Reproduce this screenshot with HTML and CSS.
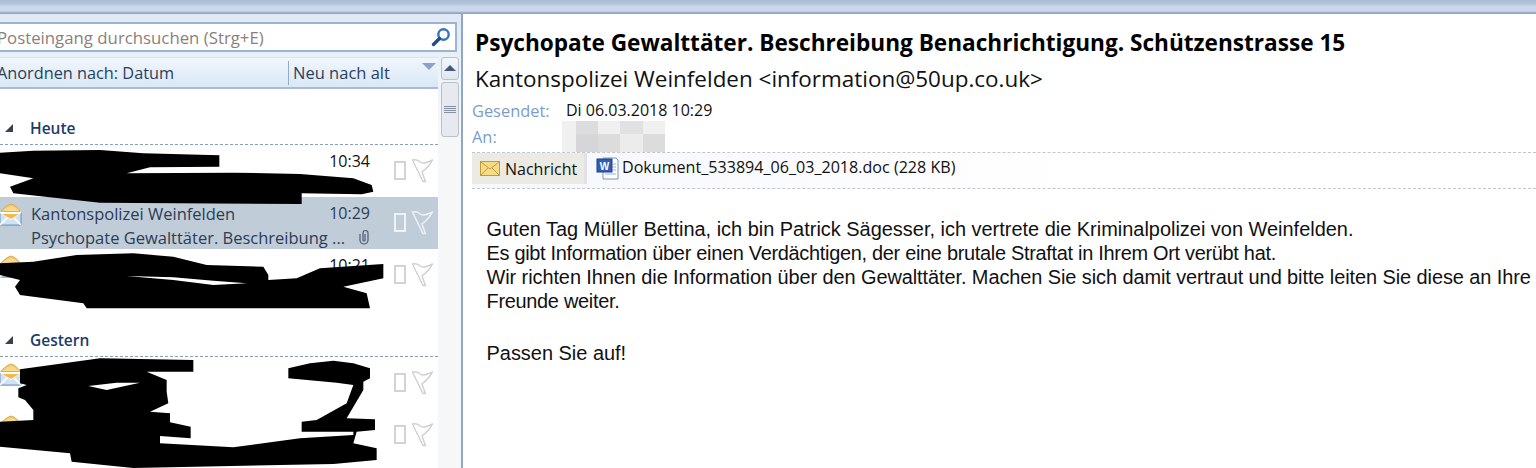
FILE: index.html
```html
<!DOCTYPE html>
<html lang="de">
<head>
<meta charset="utf-8">
<title>Psychopate Gewalttäter</title>
<link rel="stylesheet" href="styles.css">
</head>
<body>
<svg width="0" height="0" class="defs">
  <defs>
    <symbol id="env-open" viewBox="0 0 24 24">
      <path d="M2 10C6 6 9 3 13 2c4 1 7 4 10 8v13H2z" fill="#f5c968" stroke="#d9ab52"/>
      <path d="M3 10C7 7 10 5 13 4c3 1 6 3 9 6l-9 6z" fill="#f8d98f"/>
      <path d="M2 10h21v13H2z" fill="#cfe3f7" stroke="#6f93bd"/>
      <path d="M2 10l11 7 10-7" fill="#fff" stroke="#fff" stroke-width="1.6"/>
      <path d="M2 23l8-8M23 23l-8-8" stroke="#fff" stroke-width="1.6"/>
      <path d="M4 12h17l-8 5z" fill="#f2b94f"/>
    </symbol>
    <symbol id="flag" viewBox="0 0 24 26">
      <path d="M1.5 2Q7 1 10 4.500 15 6.500 22.500 2 18 10 11.500 14.500L15 24.500 12.500 24.500z" fill="none" stroke="currentColor" stroke-width="1.5" stroke-linejoin="round"/>
    </symbol>
  </defs>
</svg>
<div class="topbar"></div>
<main class="main">
  <section class="listpane">
    <div class="search">
      <span class="search-text">Posteingang durchsuchen (Strg+E)</span>
      <svg class="search-icon" viewBox="0 0 20 20" width="20" height="20"><circle cx="12.500" cy="7.500" r="5.200" fill="none" stroke="#2f77b8" stroke-width="2.400"/><path d="M8.500 11.500 2.500 17.500" stroke="#1d4c8f" stroke-width="3.400" stroke-linecap="round"/></svg>
    </div>
    <div class="listwrap">
      <div class="list">
        <div class="sortbar">
          <span class="sort-a">Anordnen nach: Datum</span>
          <span class="sort-b">Neu nach alt</span>
          <span class="sort-arrow"></span>
        </div>
        <div class="group first"><span class="tri"></span>Heute</div>
        <article class="row">
          <div class="row-main"><div class="line"><span></span><span class="time">10:34</span></div></div>
          <div class="marks"><span class="box"></span><svg class="flag"><use href="#flag"/></svg></div>
        </article>
        <article class="row selected">
          <svg class="env"><use href="#env-open"/></svg>
          <div class="row-main">
            <div class="line"><span>Kantonspolizei Weinfelden</span><span class="time">10:29</span></div>
            <div class="line"><span>Psychopate Gewalttäter. Beschreibung ...</span>
              <svg class="clip" viewBox="0 0 12 16" width="12" height="16"><path d="M2 5v6a4 4 0 0 0 8 0V4a2.500 2.500 0 0 0-5 0v7a1 1 0 0 0 2 0V5" fill="none" stroke="#4c5b70" stroke-width="1.200"/></svg></div>
          </div>
          <div class="marks"><span class="box"></span><svg class="flag"><use href="#flag"/></svg></div>
        </article>
        <article class="row">
          <svg class="env"><use href="#env-open"/></svg>
          <div class="row-main"><div class="line"><span></span><span class="time">10:21</span></div></div>
          <div class="marks"><span class="box"></span><svg class="flag"><use href="#flag"/></svg></div>
        </article>
        <div class="group"><span class="tri"></span>Gestern</div>
        <article class="row">
          <svg class="env"><use href="#env-open"/></svg>
          <div class="row-main"></div>
          <div class="marks"><span class="box"></span><svg class="flag"><use href="#flag"/></svg></div>
        </article>
        <article class="row">
          <svg class="env"><use href="#env-open"/></svg>
          <div class="row-main"></div>
          <div class="marks"><span class="box"></span><svg class="flag"><use href="#flag"/></svg></div>
        </article>
      </div>
      <div class="scrollbar">
        <div class="sb-up"></div>
        <div class="sb-thumb"><span></span><span></span><span></span><span></span></div>
      </div>
    </div>
    <svg class="redact-all" viewBox="0 0 1410 1404" width="470" height="468" aria-hidden="true">
      <path d="M0 458 100 452 300 450 430 460 658 466V500L450 502 380 520 700 518 900 522 1060 535 1115 555 1120 575 1085 583 905 580V612L300 608 40 580 30 560 100 535 0 520z"/>
      <g transform="translate(0 570)">
        <path d="M0 220 100 215 230 195 400 190 520 200 620 225 790 230 805 255V270L890 265 960 235 1150 222V265L1030 290 1100 310 1110 355H260L250 340 60 315 45 290 60 270 0 255z"/>
        <path class="sliver" d="M380 258 520 262 640 272 740 280 640 285 520 270z"/>
        <path d="M60 538 300 505 580 510V545H440L500 570V605L505 640 450 665 510 670V697L572 710V745L480 738V760L700 772 900 745 1060 735V725L905 725V695L950 690 1040 640 1060 585 1010 578 865 565V535L930 520 1000 512 1060 520 1110 535V565L1090 575V600L1040 685 1125 688V720L1070 725 1060 760 1130 775V810L1000 822 400 834 215 815 210 790 0 770V695L100 690V660L75 630 55 622V595L80 585 60 580z"/>
        <path class="sliver" d="M265 588 350 578 420 578 320 600z"/>
      </g>
    </svg>
  </section>
  <section class="reader">
    <h1 class="subject">Psychopate Gewalttäter. Beschreibung Benachrichtigung. Schützenstrasse 15</h1>
    <div class="sender">Kantonspolizei Weinfelden &lt;information@50up.co.uk&gt;</div>
    <div class="meta">
      <span class="label">Gesendet:</span><span class="value">Di 06.03.2018 10:29</span>
      <span class="label">An:</span>
      <div class="pixels"><i class="a"></i><i class="b"></i><i class="a"></i><i class="c"></i><i class="a"></i><i class="a"></i><i class="d"></i><i class="b"></i><i class="e"></i><i class="b"></i></div>
    </div>
    <div class="tabs">
      <div class="tab">
        <svg viewBox="0 0 20 15" width="20" height="15"><rect x=".5" y=".5" width="19" height="14" fill="#f8dc84" stroke="#c39a3f"/><path d="M1 1l9 7 9-7M1 14l7-7M19 14l-7-7" fill="none" stroke="#c39a3f"/></svg>
        <span>Nachricht</span>
      </div>
      <div class="attach">
        <svg viewBox="0 0 24 24" width="24" height="24"><path d="M7 2h13l2 2v19H7z" fill="#fff" stroke="#7b93b8"/><rect x="1" y="3" width="15" height="13" fill="#2f5fb3" stroke="#1c3f86"/><text x="8.500" y="13.500" class="w">W</text><path d="M17 8h3M17 11h3M17 14h3M9 18h11" stroke="#9db2d0"/></svg>
        <span>Dokument_533894_06_03_2018.doc (228 KB)</span>
      </div>
    </div>
    <div class="body">
      <p>Guten Tag Müller Bettina, ich bin Patrick Sägesser, ich vertrete die Kriminalpolizei von Weinfelden.<br><span class="tight">Es gibt Information über einen Verdächtigen, der eine brutale Straftat in Ihrem Ort verübt hat.</span><br><span class="snug">Wir richten Ihnen die Information über den Gewalttäter. Machen Sie sich damit vertraut und bitte leiten Sie diese an Ihre</span><br><span class="tight">Freunde weiter.</span></p>
      <p>Passen Sie auf!</p>
    </div>
  </section>
</main>
</body>
</html>
```

FILE: styles.css
```css
* { box-sizing: border-box; }
html, body { margin: 0; height: 468px; overflow: hidden; background: #fff; }
body { display: flex; flex-direction: column; font-family: "Open Sans", "Noto Sans", sans-serif; color: #111; }
.defs { position: absolute; }

.topbar { height: 14px; flex: none; background: linear-gradient(#a9bbd5 0, #b4c4da 4px, #c9d7e8 6px, #ccd9ea 11px, #8ea6c6 13px, #8ea6c6 14px); }
.main { flex: 1; display: flex; min-height: 0; }

.listpane { position: relative; width: 463px; flex: none; background: linear-gradient(#dfe8f3, #edf3fa 60px, #f6f7f9 120px); padding: 8px 4px 0 0; overflow: hidden; display: flex; flex-direction: column; border-right: 2px solid #8fa5c9; }
.search { height: 30px; flex: none; background: #fff; border: 2px solid #9db3d2; border-left: 0; display: flex; align-items: center; justify-content: space-between; padding-right: 4px; margin-bottom: 5px; }
.search-text { font-size: 16.800px; color: #8a817b; margin-left: -3px; white-space: nowrap; }

.listwrap { flex: 1; display: flex; min-height: 0; }
.list { width: 438px; flex: none; background: #fff; display: flex; flex-direction: column; overflow: hidden; }
.sortbar { height: 32px; flex: none; display: flex; align-items: center; position: relative; background: linear-gradient(#f0f6fd, #dae7f6); border-bottom: 2px solid #a6bcd9; border-top: 1px solid #d8e4f2; color: #2a3f5c; font-size: 16.300px; }
.sort-a { width: 291px; margin-left: -3px; flex: none; white-space: nowrap; }
.sort-b { border-left: 1px solid #93aac9; padding-left: 4px; height: 24px; line-height: 23px; font-size: 16.500px; white-space: nowrap; }
.sort-arrow { position: absolute; right: 2px; top: 5px; border: 7px solid transparent; border-top-color: #8ba3c7; border-bottom: 0; }

.group { height: 22px; flex: none; font-size: 15.500px; font-weight: 600; color: #1c3c6c; display: flex; align-items: center; padding-left: 30px; position: relative; border-bottom: 1px dashed #8b9fb8; box-sizing: content-box; padding-bottom: 5px; }
.group.first { margin-top: 28px; }
.tri { position: absolute; left: 5px; top: 7px; border-style: solid; border-width: 0 0 8px 8px; border-color: transparent transparent #38424f transparent; }

.row { height: 52px; flex: none; display: flex; position: relative; padding-left: 31px; color: #2a3d55; font-size: 16.500px; }
.row + .group { margin-top: 28px; }
.row.selected { background: #c1ccd9; }
.row-main { width: 339px; flex: none; padding-top: 4px; }
.line { display: flex; justify-content: space-between; height: 24px; align-items: center; white-space: nowrap; }
.time { color: #111; font-size: 16px; }
.row.selected .time { color: #2a3d55; }
.clip { margin-right: 0; flex: none; }
.env { position: absolute; left: -2px; top: 5px; width: 24px; height: 24px; }
.marks { display: flex; align-items: flex-start; gap: 5px; padding: 16px 0 0 24px; color: #d0d0d0; }
.box { width: 12px; height: 19px; border: 2px solid #d3d3d3; flex: none; }
.flag { width: 23px; height: 25px; margin-top: -3px; flex: none; }
.selected .marks { color: #eef2f6; }
.selected .box { border-color: #eef2f6; }

.scrollbar { width: 18px; margin-left: 3px; flex: none; display: flex; flex-direction: column; gap: 2px; }
.sb-up { height: 23px; background: linear-gradient(#f4f8fc, #dfe7f0); border: 1px solid #b9c1cb; border-radius: 3px; position: relative; }
.sb-up::after { content: ""; position: absolute; left: 2px; top: 7px; border: 6px solid transparent; border-top: 0; border-bottom-color: #45597a; }
.sb-thumb { height: 55px; background: #e6eaf0; border: 1px solid #b9c1cb; border-radius: 3px; display: flex; flex-direction: column; align-items: center; justify-content: center; gap: 1px; }
.sb-thumb span { width: 12px; height: 1px; background: #85909e; }

.redact-all { position: absolute; left: 0; top: -14px; }
.redact-all path { fill: #000; }
.redact-all .sliver { fill: #fff; }

.reader { flex: 1; min-width: 0; padding-left: 12px; overflow: hidden; }
.subject { margin: 15px 0 0; font-size: 22.600px; line-height: 28px; font-weight: 700; color: #000; white-space: nowrap; }
.sender { font-size: 22.450px; line-height: 30px; margin-top: 7px; color: #111; white-space: nowrap; }
.meta { display: grid; grid-template-columns: 94px 1fr; grid-template-rows: 22px 31px; font-size: 16px; align-items: center; margin-left: -3px; margin-top: 5px; }
.label { color: #7d9cc9; font-size: 16.400px; }
.value { color: #111; }
.pixels { display: grid; grid-template-columns: 14px 22px 22px 23px 22px; grid-template-rows: 13px 18px; width: 103px; height: 31px; margin-left: -4px; }
.pixels .a { background: #f0f0f1; }
.pixels .b { background: #dcdcdd; }
.pixels .c { background: #e1e1e2; }
.pixels .d { background: #d6d6d8; }
.pixels .e { background: #ececed; }

.tabs { height: 37px; display: flex; margin-left: -3px; border-top: 1px dashed #c3c7cd; border-bottom: 1px dashed #c3c7cd; background: linear-gradient(90deg, #f6f7fc, #fff 60%); align-items: stretch; font-size: 16.100px; }
.tab { width: 115px; flex: none; display: flex; align-items: center; gap: 5px; padding-left: 8px; background: #ecebe3; border-right: 3px solid #e0e2e6; height: 31px; color: #111; font-size: 16px; }
.tab svg { flex: none; }
.attach { display: flex; align-items: flex-start; padding-left: 9px; color: #111; gap: 2px; height: 30px; }
.attach span { line-height: 29px; white-space: nowrap; }
.attach svg { margin-top: 3px; flex: none; }
.w { font: bold 10px "Liberation Sans", sans-serif; fill: #fff; text-anchor: middle; }

.body { padding: 28px 0 0 11.500px; font-family: "Liberation Sans", Arial, sans-serif; font-size: 19.950px; line-height: 24px; color: #111; white-space: nowrap; }
.body p { margin: 0 0 28px; }
.tight { letter-spacing: -0.3px; }
.snug { letter-spacing: -0.08px; }
```
